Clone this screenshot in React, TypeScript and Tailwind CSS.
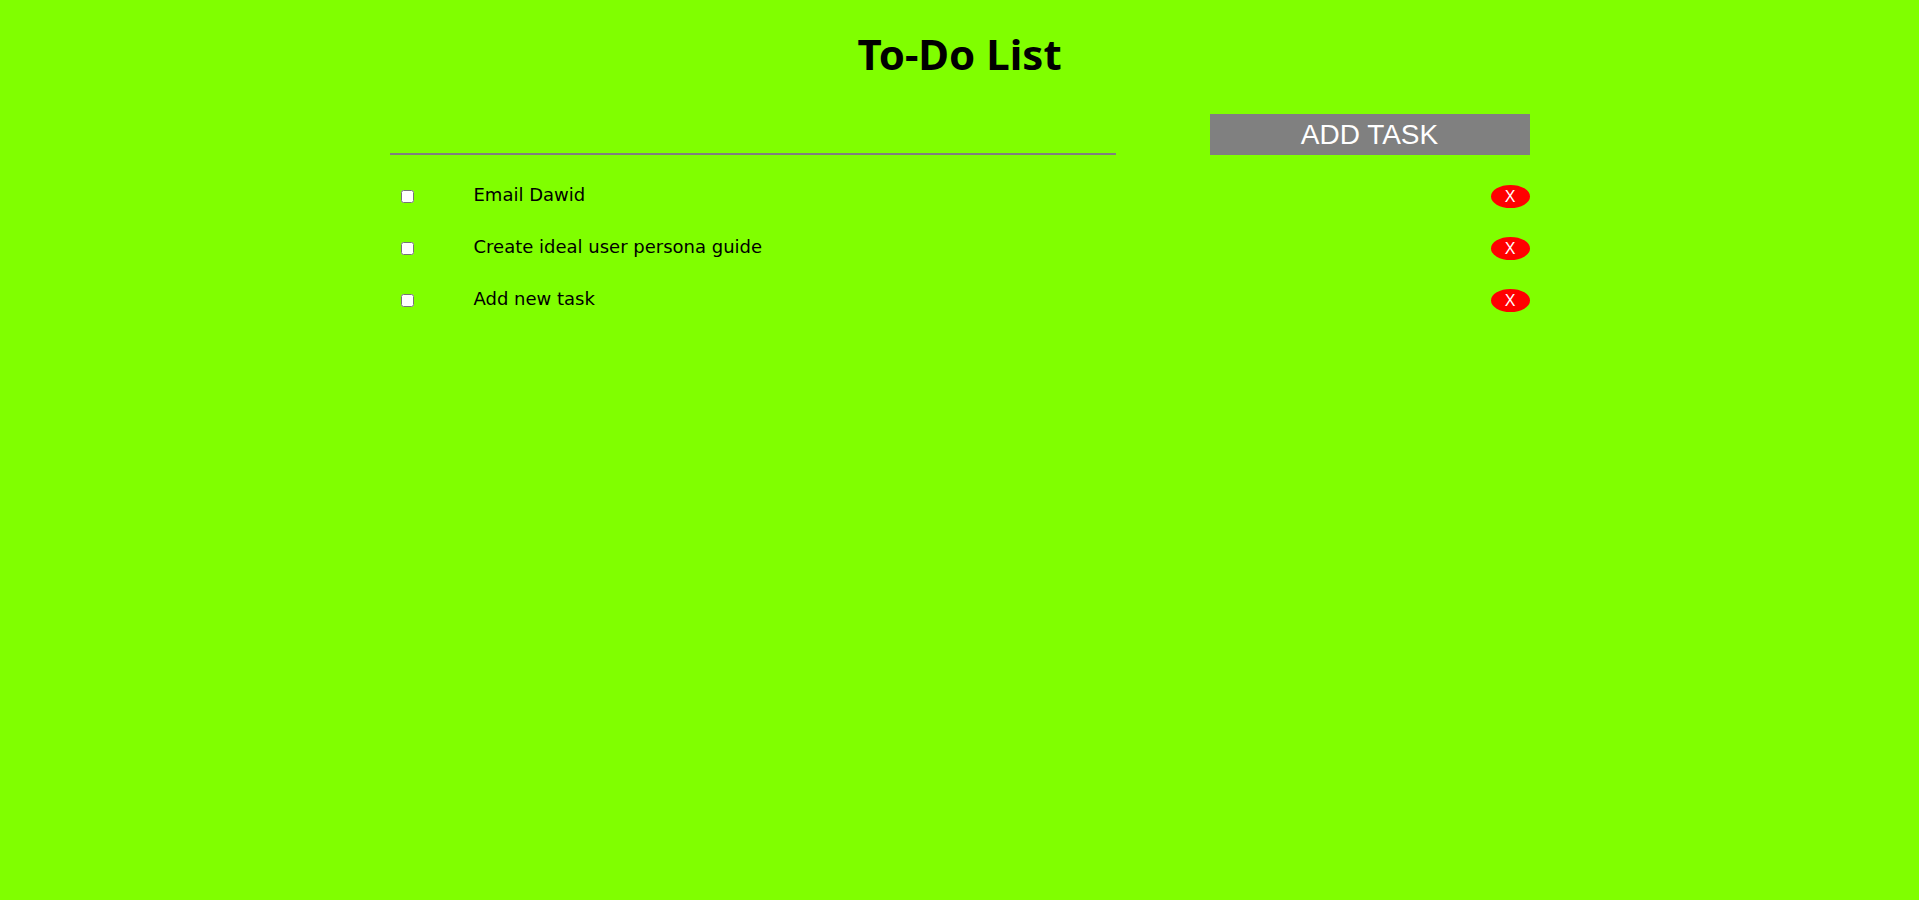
import React, { useState } from 'react';

interface Task {
    id: number;
    text: string;
    done: boolean;
}

const initialTasks: Task[] = [
    { id: 1, text: 'Email Dawid', done: false },
    { id: 2, text: 'Create ideal user persona guide', done: false },
    { id: 3, text: 'Add new task', done: false },
];

const App: React.FC = () => {
    const [tasks, setTasks] = useState<Task[]>(initialTasks);
    const [newTask, setNewTask] = useState<string>('');

    const addTask = () => {
        if (!newTask.trim()) return;
        setTasks((prev) => [...prev, { id: Date.now(), text: newTask, done: false }]);
        setNewTask('');
    };

    const toggleTask = (id: number) => {
        setTasks((prev) => prev.map((t) => (t.id === id ? { ...t, done: !t.done } : t)));
    };

    const removeTask = (id: number) => {
        setTasks((prev) => prev.filter((t) => t.id !== id));
    };

    return (
        <div className="min-h-screen bg-[#80ff00] font-['DejaVu_Sans',sans-serif] text-black">
            <div className="w-[1140px] mx-auto pt-[24px]">
                <h1 className="text-center text-[42px] font-bold leading-[60px] font-['Noto_Sans',sans-serif]">To-Do List</h1>
                <div className="mt-[30px] flex justify-between items-end">
                    <input
                        type="text"
                        className="w-[726px] h-[40px] bg-transparent border-b-2 border-[#808080] outline-none text-[18px]"
                        value={newTask}
                        onChange={(e) => setNewTask(e.target.value)}
                    />
                    <button
                        onClick={addTask}
                        className="w-[320px] h-[41px] bg-[#808080] text-white text-[28px] leading-[41px] font-['Liberation_Sans',sans-serif]"
                    >
                        ADD TASK
                    </button>
                </div>
                <ul className="mt-[29px]">
                    {tasks.map((task) => (
                        <li key={task.id} className="flex items-center h-[24px] mb-[28px]">
                            <input
                                type="checkbox"
                                checked={task.done}
                                onChange={() => toggleTask(task.id)}
                                className="ml-[11px] w-[13px] h-[13px]"
                            />
                            <span className="ml-[60px] pb-[3px] text-[18px] flex-1">{task.text}</span>
                            <button
                                onClick={() => removeTask(task.id)}
                                className="w-[39px] h-[23px] rounded-[50%] bg-[#ff0000] text-white text-[16px] leading-[23px] font-['Liberation_Sans',sans-serif]"
                            >
                                X
                            </button>
                        </li>
                    ))}
                </ul>
            </div>
        </div>
    );
};

export default App;
